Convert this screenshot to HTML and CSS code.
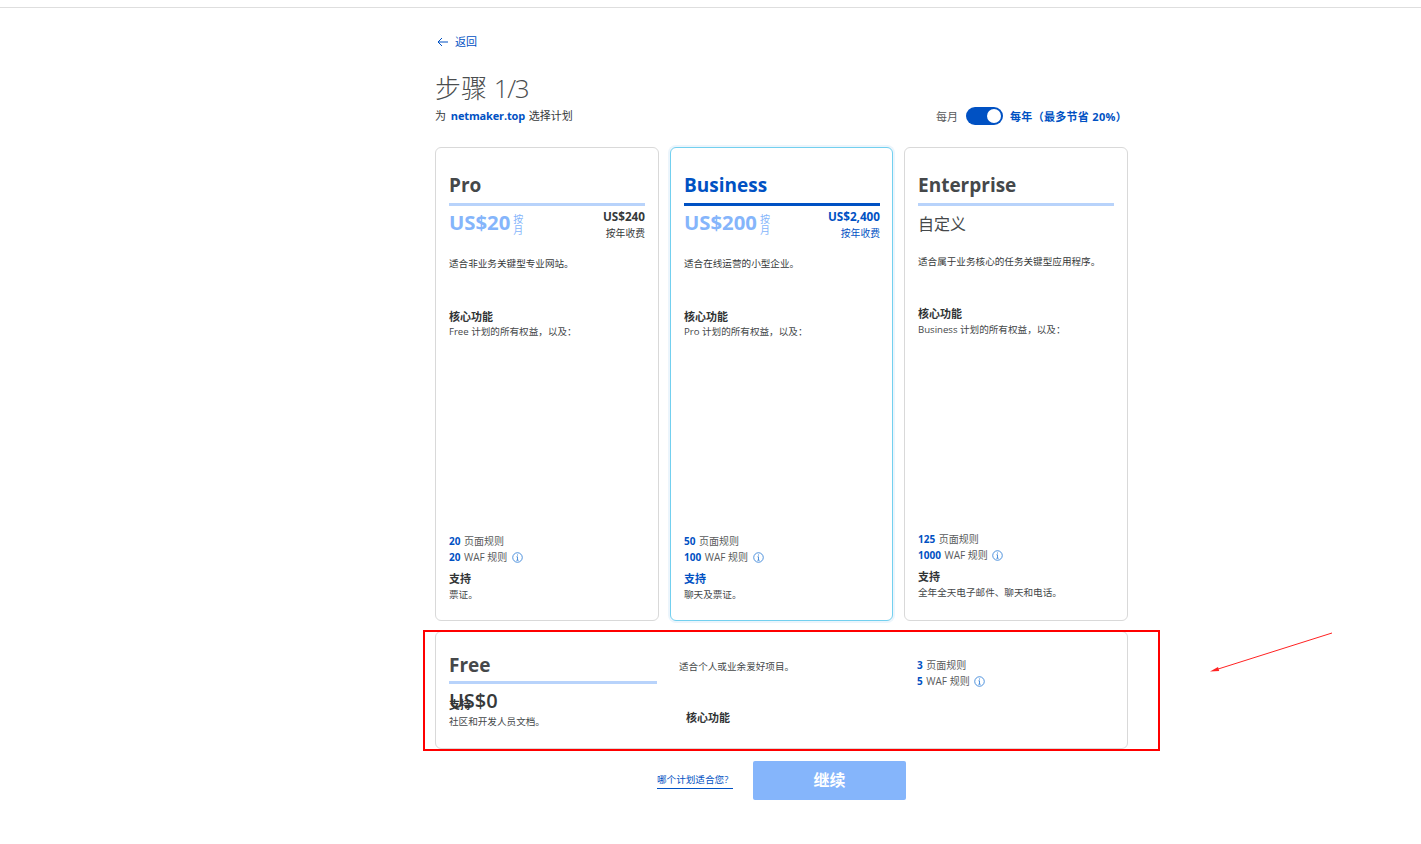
FILE: index.html
```html
<!DOCTYPE html>
<html lang="zh">
<head>
<meta charset="utf-8">
<title>步骤 1/3</title>
<link rel="stylesheet" href="styles.css">
</head>
<body>
<div class="topbar"></div>
<main class="page">
  <a class="back"><svg class="back-icon" viewBox="0 0 12 10" width="12" height="10"><path d="M11 5H1M5 1L1 5l4 4" fill="none" stroke="#0051c3" stroke-width="1"/></svg>返回</a>
  <h1 class="title">步骤 <span class="step">1/3</span></h1>
  <div class="subrow">
    <p class="sub">为 <b class="domain">netmaker.top</b> 选择计划</p>
    <div class="billing">
      <span class="bill-m">每月</span>
      <span class="switch"><span class="knob"></span></span>
      <span class="bill-y">每年（最多节省 20%）</span>
    </div>
  </div>
  <section class="plans">
    <article class="card">
      <h2 class="name">Pro</h2>
      <div class="price-row">
        <div class="price"><span class="amount">US$20</span><span class="per">按<br>月</span></div>
        <div class="annual"><b>US$240</b><span>按年收费</span></div>
      </div>
      <p class="desc">适合非业务关键型专业网站。</p>
      <h3 class="label">核心功能</h3>
      <p class="small">Free 计划的所有权益，以及：</p>
      <div class="bottom">
        <p class="rule"><b>20</b> 页面规则</p>
        <p class="rule"><b>20</b> WAF 规则 <svg class="info" viewBox="0 0 12 12"><circle cx="6" cy="6" r="5.2"/><path d="M6 5.200v3.600M4.800 9h2.400M4.900 5.200H6M6 2.700v1.200"/></svg></p>
        <h3 class="label support">支持</h3>
        <p class="small">票证。</p>
      </div>
    </article>
    <article class="card selected">
      <h2 class="name">Business</h2>
      <div class="price-row">
        <div class="price"><span class="amount">US$200</span><span class="per">按<br>月</span></div>
        <div class="annual"><b>US$2,400</b><span>按年收费</span></div>
      </div>
      <p class="desc">适合在线运营的小型企业。</p>
      <h3 class="label">核心功能</h3>
      <p class="small">Pro 计划的所有权益，以及：</p>
      <div class="bottom">
        <p class="rule"><b>50</b> 页面规则</p>
        <p class="rule"><b>100</b> WAF 规则 <svg class="info" viewBox="0 0 12 12"><circle cx="6" cy="6" r="5.2"/><path d="M6 5.200v3.600M4.800 9h2.400M4.900 5.200H6M6 2.700v1.200"/></svg></p>
        <h3 class="label support">支持</h3>
        <p class="small">聊天及票证。</p>
      </div>
    </article>
    <article class="card enterprise">
      <h2 class="name">Enterprise</h2>
      <div class="custom">自定义</div>
      <p class="desc">适合属于业务核心的任务关键型应用程序。</p>
      <h3 class="label">核心功能</h3>
      <p class="small">Business 计划的所有权益，以及：</p>
      <div class="bottom">
        <p class="rule"><b>125</b> 页面规则</p>
        <p class="rule"><b>1000</b> WAF 规则 <svg class="info" viewBox="0 0 12 12"><circle cx="6" cy="6" r="5.2"/><path d="M6 5.200v3.600M4.800 9h2.400M4.900 5.200H6M6 2.700v1.200"/></svg></p>
        <h3 class="label support">支持</h3>
        <p class="small">全年全天电子邮件、聊天和电话。</p>
      </div>
    </article>
  </section>
  <section class="card free">
    <div class="free-a">
      <h2 class="name">Free</h2>
      <div class="free-price">US$0</div>
      <h3 class="label overlap">支持</h3>
      <p class="small">社区和开发人员文档。</p>
    </div>
    <div class="free-b">
      <p class="small">适合个人或业余爱好项目。</p>
      <h3 class="label core">核心功能</h3>
    </div>
    <div class="free-c">
      <p class="rule"><b>3</b> 页面规则</p>
      <p class="rule"><b>5</b> WAF 规则 <svg class="info" viewBox="0 0 12 12"><circle cx="6" cy="6" r="5.2"/><path d="M6 5.200v3.600M4.800 9h2.400M4.900 5.200H6M6 2.700v1.200"/></svg></p>
    </div>
  </section>
  <div class="actions">
    <a class="which">哪个计划适合您?</a>
    <button class="continue">继续</button>
  </div>
</main>
<div class="redbox"></div>
<svg class="arrow" viewBox="0 0 124 42" width="124" height="42"><path d="M123 1L6 38" stroke="#f22" stroke-width="1"/><path d="M1 39.500L9 35l1.200 4z" fill="#f22"/></svg>
</body>
</html>
```
FILE: styles.css
```css
* { box-sizing: border-box; }
html, body { margin: 0; padding: 0; }
body {
  background: #fff;
  color: #36393a;
  font-family: "Open Sans", "Noto Sans CJK SC", sans-serif;
  font-size: 10px;
  height: 844px;
  overflow: hidden;
  position: relative;
}
p, h1, h2, h3 { margin: 0; }
.topbar { height: 8px; border-bottom: 1px solid #dedede; }
.page { width: 693px; margin-left: 435px; padding-top: 26px; }
.back { display: flex; align-items: center; color: #0051c3; font-size: 11px; line-height: 16px; padding-left: 2px; }
.back-icon { margin-right: 6px; }
.title { font-size: 26px; font-weight: 300; line-height: 36px; margin-top: 20px; color: #4a4d4e; }
.step { letter-spacing: -1.300px; }
.subrow { display: flex; justify-content: space-between; align-items: center; height: 20px; }
.sub { font-size: 11px; line-height: 16px; margin-top: -1px; }
.domain { color: #0051c3; font-weight: 700; margin: 0 1px 0 2px; letter-spacing: -0.150px; }
.billing { display: flex; align-items: center; margin-right: 1px; font-size: 11px; }
.bill-m { color: #595b5c; margin-right: 8px; }
.switch { width: 37px; height: 18px; border-radius: 9px; background: #0051c3; display: flex; justify-content: flex-end; align-items: center; padding-right: 2px; margin-right: 7px; }
.knob { width: 14px; height: 14px; border-radius: 50%; background: #fff; }
.bill-y { color: #0051c3; font-weight: 700; letter-spacing: 0.300px; }
.plans { display: grid; grid-template-columns: 224px 223px 224px; gap: 11px; margin-top: 21px; }
.card { border: 1px solid #d9d9d9; border-radius: 6px; background: #fff; padding: 14px 13px 0; height: 474px; display: flex; flex-direction: column; }
.selected { border-color: #73d0ef; box-shadow: 0 0 0 2px #ecf5fc; padding-right: 12px; }
.name { font-size: 19px; font-weight: 700; line-height: 28px; padding-top: 9px; color: #45484a; height: 44px; border-bottom: 3px solid #b8d3fb; }
.selected .name { color: #0051c3; border-bottom-color: #0051c3; }
.price-row { display: flex; justify-content: space-between; height: 40px; }
.price { display: flex; align-items: flex-start; padding-top: 1px; }
.amount { font-size: 20.300px; font-weight: 700; line-height: 30px; color: #85b5fb; }
.per { font-size: 10px; line-height: 11px; color: #85b5fb; margin: 7px 0 0 3px; }
.annual { display: flex; flex-direction: column; align-items: flex-end; font-size: 9.800px; line-height: 17px; padding-top: 2px; }
.annual b { font-size: 11.700px; font-weight: 700; }
.selected .annual { color: #0051c3; }
.desc { font-size: 9.600px; line-height: 16px; margin-top: 10px; }
.label { font-size: 11px; font-weight: 600; line-height: 14px; color: #313435; margin-top: 38px; }
.small { font-size: 9.600px; line-height: 16px; color: #45484a; }
.bottom { margin-top: auto; padding-bottom: 17px; }
.rule { font-size: 10px; line-height: 16px; color: #595b5c; }
.rule b { font-size: 10px; font-weight: 700; color: #0051c3; margin-right: 1px; }
.bottom .label { margin: 7px 0 1px; }
.selected .bottom .label { color: #0051c3; }
.info { width: 11px; height: 11px; vertical-align: -2px; margin-left: 2px; fill: none; stroke: #2c7cd6; stroke-width: 0.9; }
.custom { font-size: 16px; line-height: 24px; margin-top: 6px; color: #45484a; }
.enterprise .desc { margin-top: 18px; }
.enterprise > .label { margin-top: 37px; margin-bottom: 1px; }
.enterprise .bottom { padding-bottom: 19px; }
.free { height: 118px; margin-top: 10px; flex-direction: row; padding: 14px 13px 0; }
.free-a { width: 208px; }
.free .name { height: 38px; padding-top: 5px; }
.free-price { font-size: 20px; font-weight: 600; line-height: 30px; color: #36393a; margin-top: 2px; }
.label.overlap { margin: -18px 0 2px; }
.free-b { width: 260px; padding: 13px 0 0 22px; }
.free-b .core { margin: 36px 0 0 7px; }
.free-c { padding: 11px 0 0; }
.actions { display: flex; align-items: center; margin-top: 12px; padding-left: 222px; }
.which { width: 76px; color: #0051c3; font-size: 9.600px; line-height: 14px; border-bottom: 1px solid #0051c3; padding-bottom: 1px; margin-right: 20px; }
.continue { width: 153px; height: 39px; padding: 0 0 3px; background: #85b5fb; border: 0; border-radius: 2px; color: #fff; font: 600 16px "Open Sans", "Noto Sans CJK SC", sans-serif; }
.redbox { position: absolute; left: 423px; top: 630px; width: 737px; height: 121px; border: 2px solid #f00; }
.arrow { position: absolute; left: 1209px; top: 632px; }
```
